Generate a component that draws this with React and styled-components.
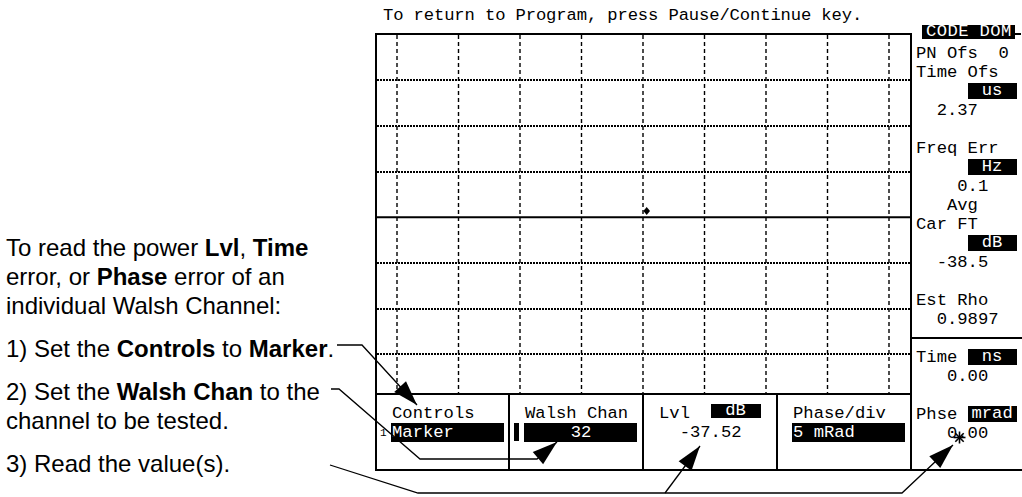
import React from "react";
import styled, { createGlobalStyle } from "styled-components";

const MONO = `"Liberation Mono", "DejaVu Sans Mono", monospace`;

const GlobalStyle = createGlobalStyle`
  html, body {
    margin: 0;
    padding: 0;
    background: #fff;
  }
  body {
    font-family: "Liberation Sans", Arial, sans-serif;
    color: #000;
  }
`;

const fields = [
  { label: "Controls", value: "Marker", prefix: "index" },
  { label: "Walsh Chan", value: "32", prefix: "bar", center: true },
  { label: "Lvl  ", unit: "dB", reading: "  -37.52" },
  { label: "Phase/div", value: "5 mRad" },
];

const panelRows = [
  { text: "PN Ofs  0" },
  { text: "Time Ofs" },
  { text: "     ", unit: "us" },
  { text: "  2.37" },
  { text: "" },
  { text: "Freq Err" },
  { text: "     ", unit: "Hz" },
  { text: "    0.1" },
  { text: "   Avg" },
  { text: "Car FT" },
  { text: "     ", unit: "dB" },
  { text: "  -38.5" },
  { text: "" },
  { text: "Est Rho" },
  { text: "  0.9897" },
  { rule: true },
  { text: "Time ", unit: "ns" },
  { text: "   0.00" },
  { text: "" },
  { text: "Phse ", unit: "mrad" },
  { text: "   0.00" },
];

// call-out leader lines, page coordinates; last point is the arrow tip
const leaders = [
  { pts: [[337, 345], [362, 345], [417, 405]] },
  { pts: [[331, 389], [339, 389], [420, 459], [537, 459], [557, 442]] },
  { pts: [[330, 465], [418, 493], [902, 493], [953, 445]] },
  { pts: [[665, 493], [700, 446]] },
];

const GRID_W = 533;
const GRID_H = 358;
const COL_X = [20, 81.5, 143, 204.5, 266, 327.5, 389, 450.5, 512];
const ROW_Y = [45, 91, 137, 228, 274, 319];
const MID_Y = 182.3;

function arrowHead(tip, from, len = 25, hw = 8) {
  const dx = tip[0] - from[0];
  const dy = tip[1] - from[1];
  const d = Math.hypot(dx, dy);
  const ux = dx / d;
  const uy = dy / d;
  const bx = tip[0] - ux * len;
  const by = tip[1] - uy * len;
  const px = -uy * hw;
  const py = ux * hw;
  return `${tip[0]},${tip[1]} ${bx + px},${by + py} ${bx - px},${by - py}`;
}

function Graticule() {
  return (
    <svg width={GRID_W} height={GRID_H} viewBox={`0 0 ${GRID_W} ${GRID_H}`}>
      {COL_X.map((x) => (
        <line key={x} x1={x} y1={0} x2={x} y2={GRID_H} stroke="#000" strokeWidth="1.4" strokeDasharray="4 3" />
      ))}
      {ROW_Y.map((y) => (
        <line
          key={y}
          x1={0}
          y1={y}
          x2={GRID_W}
          y2={y}
          stroke="#000"
          strokeWidth="2"
          strokeDasharray="2 1"
          shapeRendering="crispEdges"
        />
      ))}
      <line x1={0} y1={MID_Y} x2={GRID_W} y2={MID_Y} stroke="#000" strokeWidth="2" />
      <polygon points="269.7,172 273,176 269.7,180 266.4,176" fill="#000" />
    </svg>
  );
}

function Callouts() {
  return (
    <Overlay width="1022" height="497" viewBox="0 0 1022 497">
      {leaders.map((l, i) => {
        const n = l.pts.length;
        return (
          <g key={i}>
            <polyline
              points={l.pts.map((p) => p.join(",")).join(" ")}
              fill="none"
              stroke="#000"
              strokeWidth="1.3"
            />
            <polygon points={arrowHead(l.pts[n - 1], l.pts[n - 2])} fill="#000" />
          </g>
        );
      })}
      <g stroke="#000" strokeWidth="1.6">
        <line x1="959.5" y1="431.5" x2="959.5" y2="443.5" />
        <line x1="953.5" y1="437.5" x2="965.5" y2="437.5" />
        <line x1="955.3" y1="433.3" x2="963.7" y2="441.7" />
        <line x1="963.7" y1="433.3" x2="955.3" y2="441.7" />
      </g>
    </Overlay>
  );
}

export default function App() {
  return (
    <>
      <GlobalStyle />
      <Page>
        <Notes>
          <Para>
            To read the power <B>Lvl</B>, <B>Time</B>
            <br />
            error, or <B>Phase</B> error of an
            <br />
            individual Walsh Channel:
          </Para>
          <Para>
            1) Set the <B>Controls</B> to <B>Marker</B>.
          </Para>
          <Para>
            2) Set the <B>Walsh Chan</B> to the
            <br />
            channel to be tested.
          </Para>
          <Para>3) Read the value(s).</Para>
        </Notes>

        <Instrument>
          <Message>To return to Program, press Pause/Continue key.</Message>
          <Body>
            <Frame>
              <Graph>
                <Graticule />
              </Graph>
              <Controls>
                {fields.map((f) => (
                  <Cell key={f.label}>
                    <Label>
                      {f.label}
                      {f.unit && <SmallUnit>{f.unit}</SmallUnit>}
                    </Label>
                    {f.value ? (
                      <ValueRow>
                        <Prefix>
                          {f.prefix === "index" && <Index>1</Index>}
                          {f.prefix === "bar" && <Bar />}
                        </Prefix>
                        <ValueBox $center={f.center}>{f.value}</ValueBox>
                      </ValueRow>
                    ) : (
                      <Reading>{f.reading}</Reading>
                    )}
                  </Cell>
                ))}
              </Controls>
            </Frame>

            <Panel>
              <PanelHead>
                <Title>CODE DOM</Title>
              </PanelHead>
              {panelRows.map((r, i) =>
                r.rule ? (
                  <Rule key={i} />
                ) : (
                  <PanelRow key={i}>
                    {r.text}
                    {r.unit && <Unit>{r.unit}</Unit>}
                  </PanelRow>
                )
              )}
            </Panel>
          </Body>
        </Instrument>

        <Callouts />
      </Page>
    </>
  );
}

/* ===== styles ===== */

const Page = styled.div`
  position: relative;
  display: flex;
  width: 1022px;
  height: 497px;
  overflow: hidden;
  background: #fff;
`;

const Notes = styled.div`
  width: 375px;
  flex: none;
  box-sizing: border-box;
  padding: 233px 0 0 6px;
  font-size: 24px;
  line-height: 29px;
  white-space: nowrap;
`;

const Para = styled.p`
  margin: 0 0 14px;
`;

const B = styled.b`
  font-weight: 700;
`;

const Instrument = styled.div`
  flex: 1;
  display: flex;
  flex-direction: column;
  font-family: ${MONO};
  font-size: 17.2px;
`;

const Message = styled.div`
  height: 25px;
  box-sizing: border-box;
  padding: 7px 0 0 8px;
  line-height: 18px;
  letter-spacing: -0.12px;
  white-space: pre;
`;

const Body = styled.div`
  display: flex;
  height: 446px;
  box-sizing: border-box;
  border-bottom: 2px solid #000;
`;

const Frame = styled.div`
  margin-top: 8px;
  width: 537px;
  flex: none;
  box-sizing: border-box;
  border: 2px solid #000;
  border-bottom: none;
  display: flex;
  flex-direction: column;
`;

const Graph = styled.div`
  height: ${GRID_H}px;
  overflow: hidden;

  svg {
    display: block;
  }
`;

const Controls = styled.div`
  flex: 1;
  display: grid;
  grid-template-columns: 131px repeat(3, 134px);
  border-top: 2px solid #000;
`;

const Cell = styled.div`
  box-sizing: border-box;
  padding-top: 9px;

  & + & {
    border-left: 2px solid #000;
  }
`;

const Label = styled.div`
  height: 19px;
  line-height: 19px;
  padding-left: 15px;
  white-space: pre;
`;

const SmallUnit = styled.span`
  display: inline-block;
  vertical-align: top;
  width: 50px;
  height: 14px;
  line-height: 14px;
  background: #000;
  color: #fff;
  text-align: center;
`;

const ValueRow = styled.div`
  display: flex;
  height: 19px;
`;

const Prefix = styled.div`
  width: 14px;
  flex: none;
  display: flex;
  align-items: flex-end;
`;

const Index = styled.span`
  margin: 0 0 3px 3px;
  font-size: 11px;
  line-height: 11px;
`;

const Bar = styled.span`
  align-self: stretch;
  width: 5px;
  margin: 0 0 1px 4px;
  background: #000;
`;

const ValueBox = styled.div`
  width: 113px;
  height: 19px;
  line-height: 19px;
  box-sizing: border-box;
  padding-left: 1px;
  background: #000;
  color: #fff;
  white-space: pre;
  text-align: ${(p) => (p.$center ? "center" : "left")};
`;

const Reading = styled.div`
  height: 19px;
  line-height: 19px;
  padding-left: 15px;
  white-space: pre;
`;

const Panel = styled.div`
  flex: 1;
  display: flex;
  flex-direction: column;
`;

const PanelHead = styled.div`
  position: relative;
  height: 19px;
  padding-left: 10px;

  &::after {
    content: "";
    position: absolute;
    left: 103px;
    top: 8px;
    width: 6px;
    height: 2px;
    background: #000;
  }
`;

const Title = styled.div`
  width: 93px;
  height: 14px;
  line-height: 14px;
  box-sizing: border-box;
  padding-left: 4px;
  letter-spacing: 0.4px;
  background: #000;
  color: #fff;
  white-space: pre;
`;

const PanelRow = styled.div`
  height: 19px;
  line-height: 19px;
  padding-left: 4px;
  white-space: pre;
`;

const Unit = styled.span`
  display: inline-block;
  vertical-align: top;
  width: 49px;
  height: 16px;
  line-height: 16px;
  margin-top: 1px;
  background: #000;
  color: #fff;
  text-align: center;
`;

const Rule = styled.div`
  height: 2px;
  margin: 8px 0 9px;
  background: #000;
`;

const Overlay = styled.svg`
  position: absolute;
  left: 0;
  top: 0;
  pointer-events: none;
`;
